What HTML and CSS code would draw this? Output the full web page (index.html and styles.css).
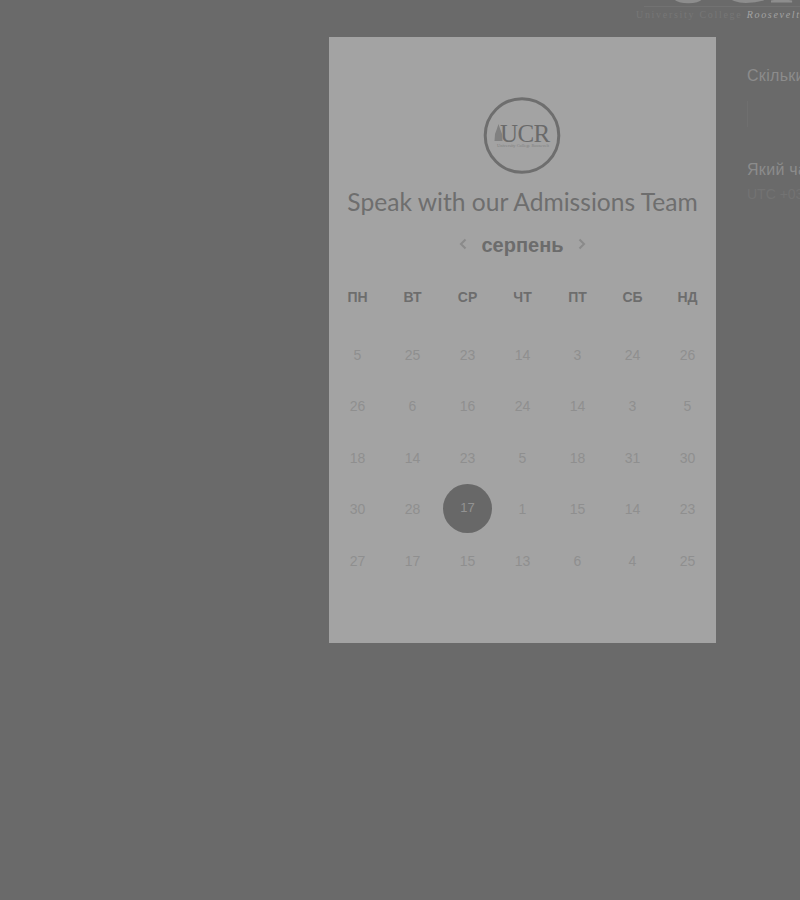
FILE: index.html
```html
<!DOCTYPE html>
<html lang="uk">
<head>
  <meta charset="UTF-8">
  <title>Speak with our Admissions Team</title>
  <link rel="stylesheet" href="styles.css">
</head>
<body>
  <header class="top-bar">
    <div class="brand">
      <div class="brand-mark">UCR</div>
      <div class="brand-rule"></div>
      <div class="brand-name">University College <em>Roosevelt</em></div>
    </div>
  </header>

  <main class="layout">
    <section class="calendar-card">
      <svg class="logo" width="78" height="77" viewBox="0 0 78 77">
        <circle cx="39" cy="38.5" r="36.8" fill="none" stroke="#6e6e6e" stroke-width="3"/>
        <path d="M11.5 44 L12 37 L13.5 33 L15.5 27 L17.5 33 L19 37 L19.5 44 Z" fill="#808080"/>
        <text x="17" y="45" class="logo-text">UCR</text>
        <text x="40" y="50" text-anchor="middle" class="logo-small">University College Roosevelt</text>
      </svg>

      <h1 class="title">Speak with our Admissions Team</h1>

      <div class="month-nav">
        <svg width="8" height="12" viewBox="0 0 8 12"><path d="M6.5 1.5 L2 6 L6.5 10.5" fill="none" stroke="#8a8a8a" stroke-width="2"/></svg>
        <span class="month">серпень</span>
        <svg width="8" height="12" viewBox="0 0 8 12"><path d="M1.5 1.5 L6 6 L1.5 10.5" fill="none" stroke="#8a8a8a" stroke-width="2"/></svg>
      </div>

      <div class="week-head">
        <span>ПН</span><span>ВТ</span><span>СР</span><span>ЧТ</span><span>ПТ</span><span>СБ</span><span>НД</span>
      </div>

      <div class="days">
        <span>5</span><span>25</span><span>23</span><span>14</span><span>3</span><span>24</span><span>26</span>
        <span>26</span><span>6</span><span>16</span><span>24</span><span>14</span><span>3</span><span>5</span>
        <span>18</span><span>14</span><span>23</span><span>5</span><span>18</span><span>31</span><span>30</span>
        <span>30</span><span>28</span><span class="selected">17</span><span>1</span><span>15</span><span>14</span><span>23</span>
        <span>27</span><span>17</span><span>15</span><span>13</span><span>6</span><span>4</span><span>25</span>
      </div>
    </section>

    <aside class="side">
      <p class="question">Скільки часу</p>
      <div class="field"></div>
      <p class="question">Який час</p>
      <p class="zone">UTC +03:00</p>
    </aside>
  </main>
</body>
</html>
```

FILE: styles.css
```css
html,
body {
  margin: 0;
  height: 900px;
  overflow: hidden;
}

body {
  background: #6a6a6a;
  font-family: "Liberation Sans", Arial, sans-serif;
}

.top-bar {
  height: 37px;
  padding-left: 636px;
  overflow: hidden;
}

.brand {
  height: 22px;
  width: 300px;
  position: relative;
}

.brand-mark {
  position: absolute;
  left: 24px;
  bottom: 18px;
  font-family: "Liberation Serif", serif;
  font-size: 78px;
  line-height: 0.7;
  color: #8d8d8d;
}

.brand-rule {
  position: absolute;
  left: 8px;
  right: 0;
  top: 6px;
  border-top: 1px solid #727272;
}

.brand-name {
  position: absolute;
  left: 0;
  bottom: 2px;
  white-space: nowrap;
  font-family: "Liberation Serif", serif;
  font-size: 10px;
  letter-spacing: 1.7px;
  color: #777;
}

.brand-name em {
  color: #a3a3a3;
}

.layout {
  display: flex;
  align-items: flex-start;
  padding-left: 329px;
}

.calendar-card {
  flex: none;
  box-sizing: border-box;
  width: 387px;
  height: 606px;
  background: #a3a3a3;
  padding-top: 60px;
  display: flex;
  flex-direction: column;
  align-items: center;
}

.logo {
  display: block;
  margin-right: 2px;
}

.logo-text {
  font-family: "Liberation Serif", serif;
  font-size: 25px;
  letter-spacing: -0.6px;
  fill: #6a6a6a;
}

.logo-small {
  font-family: "Liberation Serif", serif;
  font-size: 4.4px;
  fill: #808080;
}

.title {
  margin: 12px 0 0;
  font-family: Lato, sans-serif;
  font-size: 24.6px;
  line-height: 32px;
  font-weight: 400;
  color: #6e6e6e;
  white-space: nowrap;
}

.month-nav {
  display: flex;
  align-items: center;
  gap: 14px;
  margin-top: 12px;
  height: 30px;
}

.month-nav svg {
  margin-top: -2px;
}

.month {
  font-size: 20px;
  font-weight: 700;
  color: #6c6c6c;
}

.week-head,
.days {
  display: grid;
  grid-template-columns: repeat(7, 55px);
  justify-items: center;
  align-items: center;
}

.week-head {
  height: 30px;
  margin-top: 22px;
  font-size: 14px;
  font-weight: 700;
  color: #6d6d6d;
}

.days {
  margin-top: 17px;
  grid-auto-rows: 51.5px;
  font-size: 14px;
  color: #8f8f8f;
}

.selected {
  width: 49px;
  height: 49px;
  margin-top: -2px;
  padding-bottom: 2px;
  box-sizing: border-box;
  border-radius: 50%;
  background: #686868;
  color: #929292;
  font-size: 13px;
  display: flex;
  align-items: center;
  justify-content: center;
}

.side {
  margin-left: 31px;
  width: 300px;
  flex: none;
  font-size: 16px;
}

.question {
  margin: 0;
  color: #8c8c8c;
  letter-spacing: 0.3px;
  white-space: nowrap;
}

.side .question:first-child {
  margin-top: 30px;
}

.field {
  height: 26px;
  margin: 16px 0 34px;
  border-left: 1px solid #6f6f6f;
}

.zone {
  margin: 7px 0 0;
  font-size: 14px;
  color: #737373;
}
```
